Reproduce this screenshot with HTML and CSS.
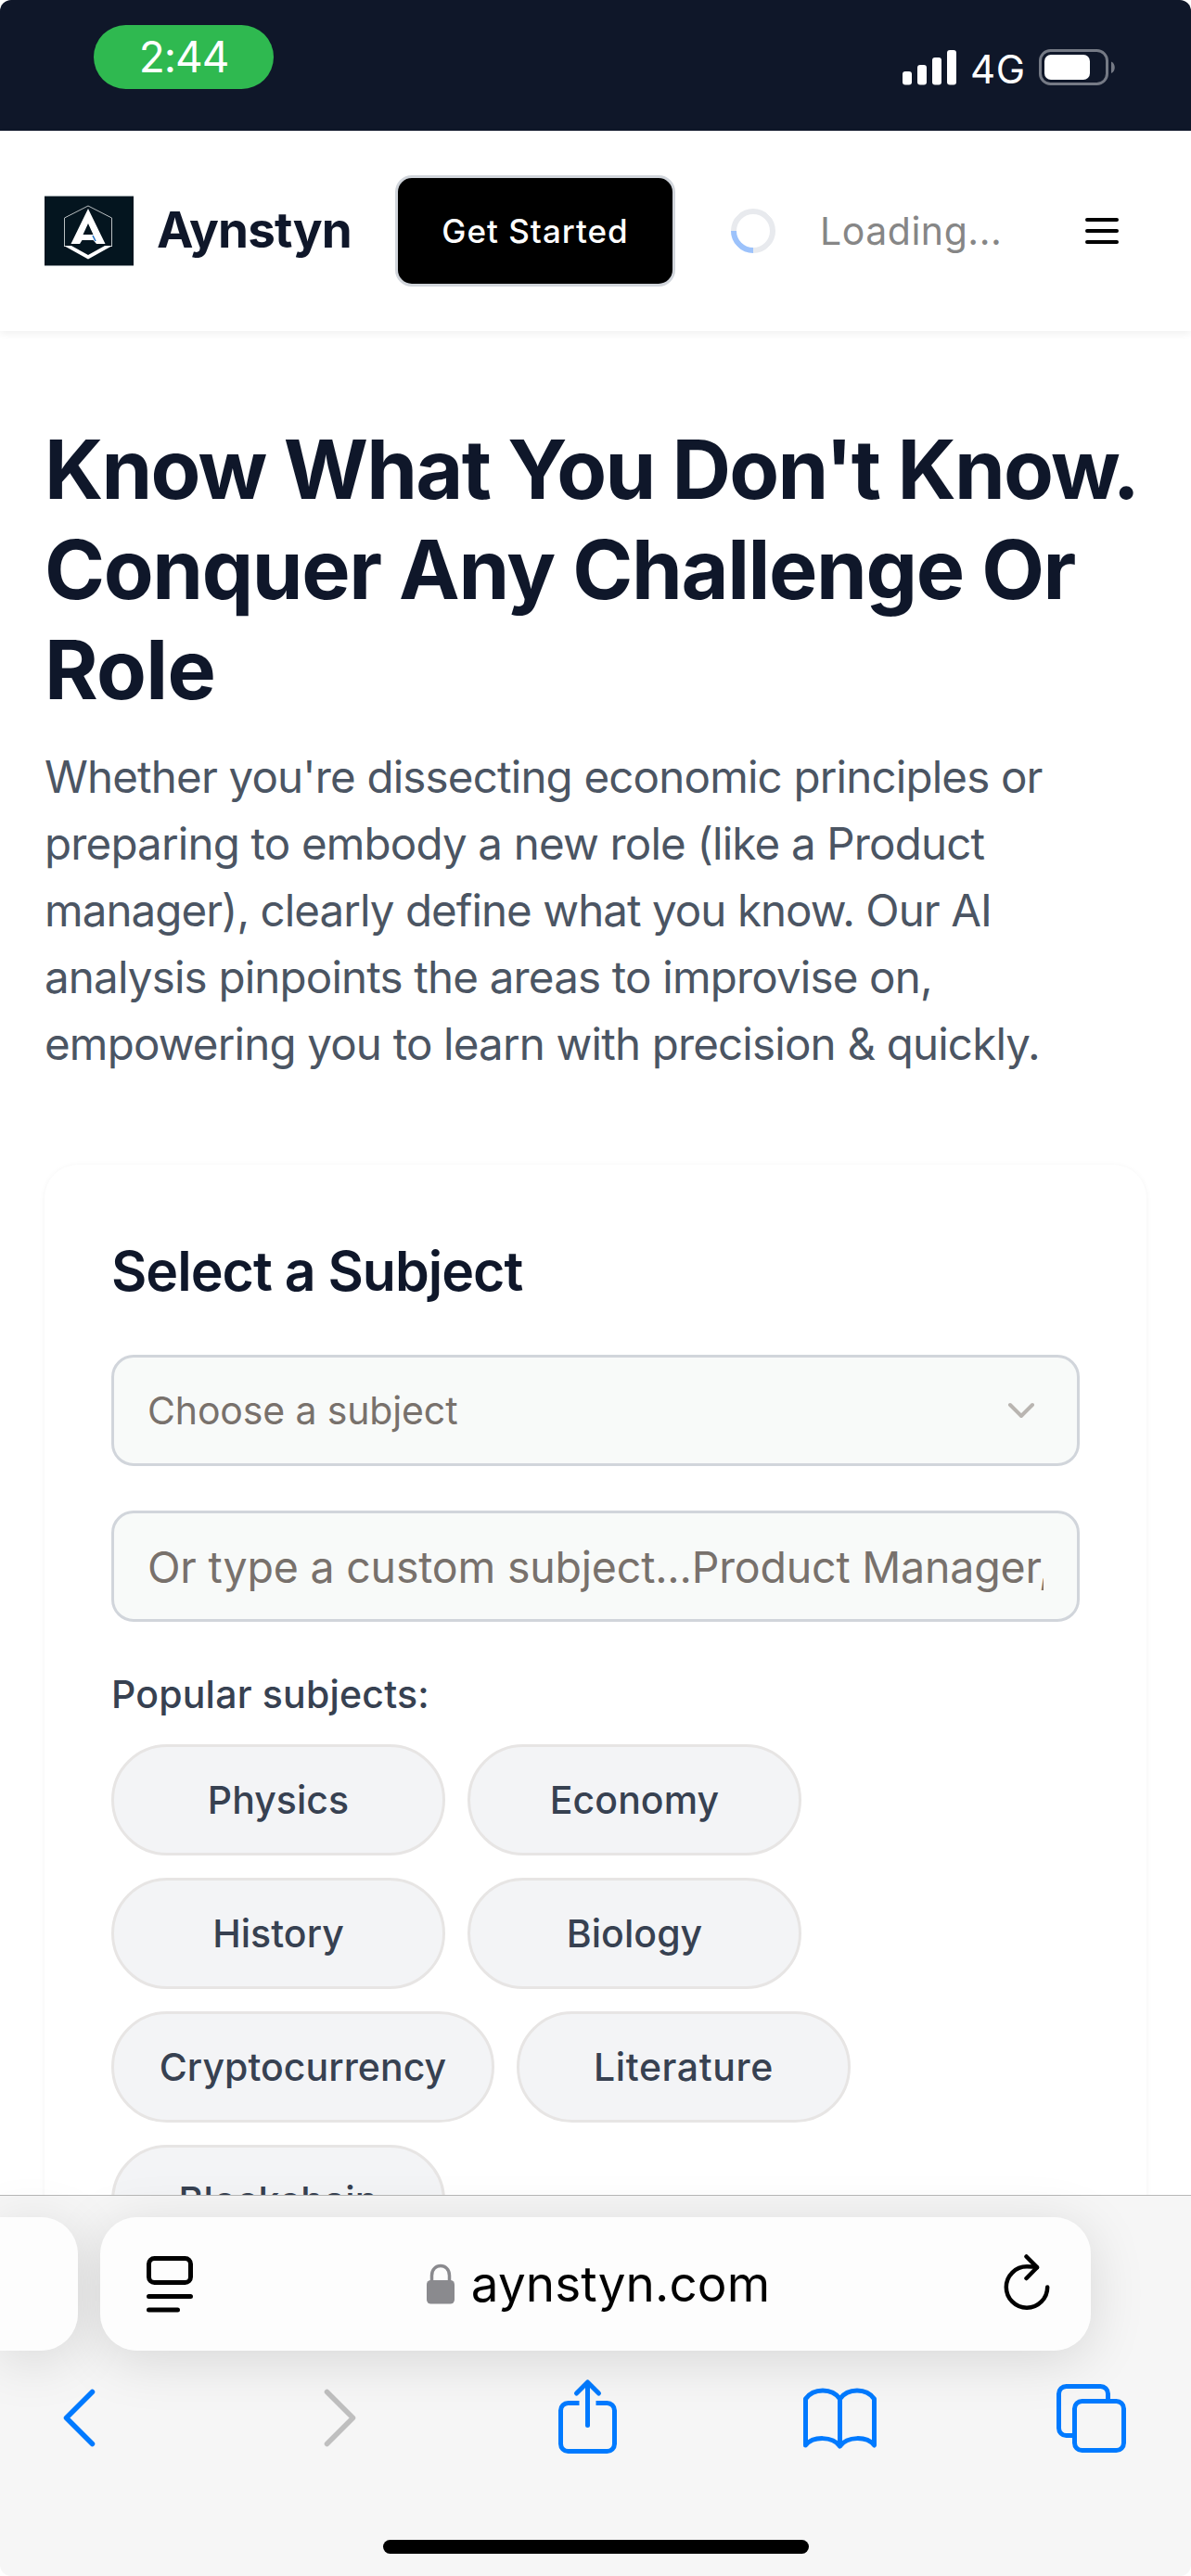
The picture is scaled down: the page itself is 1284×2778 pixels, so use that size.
FILE: index.html
```html
<!DOCTYPE html>
<html lang="en">
<head>
<meta charset="utf-8">
<title>Aynstyn</title>
<link rel="stylesheet" href="styles.css">
</head>
<body>
<div class="screen">
  <div class="status">
    <div class="status-time">2:44</div>
    <div class="status-right">
      <svg class="signal" viewBox="0 0 58 38" width="58" height="38" fill="#fff">
        <rect x="0" y="23" width="10" height="14.5" rx="3"/>
        <rect x="16" y="16" width="10" height="21.5" rx="3"/>
        <rect x="32" y="8" width="10" height="29.5" rx="3"/>
        <rect x="48" y="0" width="10" height="37.5" rx="3"/>
      </svg>
      <span class="network">4G</span>
      <svg class="battery" viewBox="0 0 82 40" width="82" height="40">
        <rect x="1.5" y="1.5" width="72" height="36" rx="11" fill="none" stroke="#757a85" stroke-width="3"/>
        <rect x="6" y="6" width="49" height="27" rx="7" fill="#fff"/>
        <path d="M78 13.5c5 2 5 10.500 0 12.500z" fill="#757a85"/>
      </svg>
    </div>
  </div>

  <header class="header">
    <svg class="logo" viewBox="0 0 96 76" width="96" height="76">
      <rect width="96" height="76" fill="#04151f"/>
      <path d="M0 .5h96M0 75.500h96" stroke="#8d979b" stroke-width="1"/>
      <path d="M47 11 21.500 24v31M47 11l25.500 13v31" fill="none" stroke="#b9bfc1" stroke-width="1"/>
      <path fill="#fff" fill-rule="evenodd" d="M47 14 65.500 52H56l-3.500-4h-12L38 52h-9.500zM47 30l-5.500 12h11z"/>
      <path d="M52 43l3 6" stroke="#1f6fc4" stroke-width="1.500"/>
      <path fill="#fff" d="M21 54h8l18 10 18-10h8L47 68.500z"/>
    </svg>
    <span class="brand">Aynstyn</span>
    <button class="cta">Get Started</button>
    <span class="spinner"></span>
    <span class="loading">Loading...</span>
    <svg class="menu" viewBox="0 0 48 48" width="48" height="48" stroke="#000" stroke-width="4" stroke-linecap="round">
      <path d="M8 12h32M8 24h32M8 36h32"/>
    </svg>
  </header>

  <main class="main">
    <h1 class="title"><span class="t1">Know What You Don't Know.</span><br><span class="t2">Conquer Any Challenge Or</span><br><span class="t3">Role</span></h1>
    <p class="lead">Whether you're dissecting economic principles or<br>preparing to embody a new role (like a Product<br><span class="tight">manager), clearly define what you know. Our AI</span><br>analysis pinpoints the areas to improvise on,<br>empowering you to learn with precision &amp; quickly.</p>

    <section class="card">
      <h2 class="card-title">Select a Subject</h2>
      <div class="field select">
        <span>Choose a subject</span>
        <svg viewBox="0 0 36 24" width="36" height="24" fill="none" stroke="#b9b5b1" stroke-width="4" stroke-linecap="round" stroke-linejoin="round"><path d="M6 6l12 12L30 6"/></svg>
      </div>
      <input class="field custom" type="text" placeholder="Or type a custom subject...Product Manager,">
      <p class="popular">Popular subjects:</p>
      <div class="chips">
        <button class="chip">Physics</button>
        <button class="chip">Economy</button>
        <button class="chip">History</button>
        <button class="chip">Biology</button>
        <button class="chip wide">Cryptocurrency</button>
        <button class="chip lit">Literature</button>
        <button class="chip">Blockchain</button>
      </div>
    </section>
  </main>

  <footer class="browser">
    <div class="tabs-strip">
      <div class="prev-tab"></div>
      <div class="address">
        <svg viewBox="0 0 56 64" width="56" height="64" fill="none" stroke="#000" stroke-width="5" stroke-linecap="round">
          <rect x="5.500" y="4.500" width="45" height="26" rx="6"/>
          <path d="M5.500 45.500h45M5.500 60h31"/>
        </svg>
        <div class="host">
          <svg viewBox="0 0 30 44" width="30" height="44">
            <path d="M5.500 20V13c0-14 19-14 19 0v7" fill="none" stroke="#8a8a8e" stroke-width="3.500"/>
            <rect x="0" y="18" width="30" height="25.500" rx="4.500" fill="#8a8a8e"/>
          </svg>
          <span>aynstyn.com</span>
        </div>
        <svg viewBox="0 0 56 64" width="56" height="64" fill="none" stroke="#000" stroke-width="4.500" stroke-linecap="round" stroke-linejoin="round">
          <path d="M50.200 35.500a22.200 22.200 0 1 1-22.200-22.200q7 0 11 .8"/>
          <path d="M27.500 2.500 39 14.200 27.500 26"/>
        </svg>
      </div>
    </div>
    <nav class="nav">
      <svg viewBox="0 0 42 84" width="42" height="84" fill="none" stroke="#007aff" stroke-width="5.500" stroke-linecap="round" stroke-linejoin="round"><path d="M35.500 14.500 7.500 42.500l28 28"/></svg>
      <svg viewBox="0 0 42 84" width="42" height="84" fill="none" stroke="#bfbfbf" stroke-width="5.500" stroke-linecap="round" stroke-linejoin="round"><path d="M6.500 14.500l28 28-28 28"/></svg>
      <svg viewBox="0 0 68 84" width="68" height="84" fill="none" stroke="#007aff" stroke-width="5" stroke-linecap="round" stroke-linejoin="round">
        <path stroke-linecap="butt" d="M24.500 26.500H12.500a8 8 0 0 0-8 8v36a8 8 0 0 0 8 8h42a8 8 0 0 0 8-8v-36a8 8 0 0 0-8-8H42.500"/>
        <path d="M33.500 50.500V4.500M21.500 16l12-12 12 12"/>
      </svg>
      <svg viewBox="0 0 85 84" width="85" height="84" fill="none" stroke="#007aff" stroke-width="5" stroke-linecap="round" stroke-linejoin="round">
        <path d="M42.500 22C34 10 14 10 5.500 22v50c8-10 29-10 37 1 8-11 29-11 37-1V22c-8.500-12-28.500-12-37 0v51"/>
      </svg>
      <svg viewBox="0 0 81 84" width="81" height="84" fill="none" stroke="#007aff" stroke-width="5">
        <path d="M58.500 25V16.500a8 8 0 0 0-8-8h-37a8 8 0 0 0-8 8v37a8 8 0 0 0 8 8H22"/>
        <rect x="22.500" y="24.500" width="53" height="53" rx="8"/>
      </svg>
    </nav>
    <div class="home"></div>
  </footer>
</div>
</body>
</html>
```
FILE: styles.css
```css
* { box-sizing: border-box; margin: 0; padding: 0; }

body {
  width: 1284px;
  height: 2778px;
  overflow: hidden;
  background: #fff;
  font-family: Inter, "Liberation Sans", sans-serif;
}

svg { display: block; flex: none; }
button, input { font-family: inherit; }

.screen {
  display: flex;
  flex-direction: column;
  width: 1284px;
  height: 2778px;
  border-radius: 12px;
  overflow: hidden;
}

/* Status bar */
.status {
  flex: none;
  display: flex;
  align-items: flex-start;
  justify-content: space-between;
  height: 141px;
  padding: 27px 82px 0 101px;
  background: #0f1729;
  color: #fff;
}
.status-time {
  width: 194px;
  height: 69px;
  border-radius: 34.5px;
  background: #2fb950;
  font-size: 46px;
  line-height: 69px;
  letter-spacing: -1px;
  text-align: center;
}
.status-right {
  display: flex;
  align-items: center;
  height: 91px;
}
.network {
  width: 60px;
  margin: 3px 14px 0 15px;
  font-size: 42px;
  letter-spacing: 0.5px;
}

/* Site header */
.header {
  flex: none;
  display: flex;
  align-items: center;
  height: 216px;
  padding: 0 72px 0 48px;
  background: #fff;
  box-shadow: 0 3px 8px rgba(0, 0, 0, 0.06);
}
.brand {
  width: 212px;
  margin: -3px 45px 0 25px;
  color: #0f172a;
  font-size: 53px;
  font-weight: 700;
  letter-spacing: -0.9px;
}
.cta {
  width: 302px;
  height: 120px;
  border: 3px solid #d1d5db;
  border-radius: 18px;
  background: #000;
  color: #fff;
  font-size: 35px;
  font-weight: 500;
  letter-spacing: 1px;
}
.spinner {
  width: 48px;
  height: 48px;
  margin-left: 60px;
  border: 6px solid #e8eaee;
  border-radius: 50%;
  border-left-color: #9cc2fb;
  transform: rotate(-45deg);
}
.loading {
  margin-left: 48px;
  color: #868686;
  font-size: 41px;
  letter-spacing: 0.53px;
}
.menu { margin-left: auto; }

/* Page */
.main {
  flex: 1;
  min-height: 0;
  padding: 95px 48px 0;
  overflow: hidden;
}
.title {
  color: #0f172a;
  font-size: 88px;
  font-weight: 700;
  line-height: 108px;
  white-space: nowrap;
}
.t1 { letter-spacing: -1.75px; }
.t2 { letter-spacing: -1.39px; }
.t3 { letter-spacing: -0.7px; }
.lead {
  margin-top: 26px;
  color: #4b5563;
  font-size: 47.5px;
  line-height: 72px;
  letter-spacing: -0.83px;
  white-space: nowrap;
}
.tight { letter-spacing: -0.95px; }
.card {
  height: 1500px;
  margin-top: 94px;
  padding: 73px 72px 72px;
  border-radius: 36px;
  background: #fff;
  box-shadow: 0 1px 6px rgba(0, 0, 0, 0.05);
}
.card-title {
  color: #0f172a;
  font-size: 59px;
  font-weight: 600;
  line-height: 84px;
  letter-spacing: -1px;
}
.field {
  display: flex;
  align-items: center;
  justify-content: space-between;
  width: 100%;
  height: 120px;
  border: 3px solid #d1d5db;
  border-radius: 24px;
  background: #f8faf9;
  color: #78716c;
}
.select {
  margin-top: 48px;
  padding: 0 42px 0 36px;
  font-size: 41px;
  letter-spacing: -0.14px;
}
.custom {
  margin-top: 48px;
  padding: 2px 36px 0;
  font-size: 46.5px;
  letter-spacing: -0.2px;
}
.custom::placeholder { color: #78716c; opacity: 1; }
.popular {
  margin-top: 48px;
  color: #374151;
  font-size: 41px;
  font-weight: 500;
  line-height: 60px;
  letter-spacing: 0.2px;
}
.chips {
  display: flex;
  flex-wrap: wrap;
  gap: 24px;
  margin-top: 24px;
}
.chip {
  width: 360px;
  height: 120px;
  border: 3px solid #e7e5e4;
  border-radius: 60px;
  background: #f3f4f6;
  color: #374151;
  font-size: 41px;
  font-weight: 500;
  letter-spacing: 0.05px;
}
.chip.wide { width: 413px; }
.chip.lit { letter-spacing: 0.6px; }

/* Browser toolbar */
.browser {
  flex: none;
  position: relative;
  height: 411px;
  border-top: 1px solid #b8b8b8;
  background: #f6f6f6;
}
.tabs-strip {
  display: flex;
  gap: 24px;
  padding-top: 23px;
  isolation: isolate;
}
.prev-tab, .address {
  position: relative;
  height: 144px;
  background: #fdfdfd;
}
/* Shadows sit on a layer beneath both tabs so neither darkens its neighbour */
.prev-tab::before, .address::before {
  content: "";
  position: absolute;
  inset: 0;
  z-index: -1;
  border-radius: inherit;
  box-shadow: 0 10px 60px rgba(0, 0, 0, 0.13);
}
.prev-tab { width: 84px; border-radius: 0 40px 40px 0; }
.address {
  display: flex;
  align-items: center;
  justify-content: space-between;
  width: 1068px;
  padding: 0 41px 0 47px;
  border-radius: 40px;
}
.host {
  display: flex;
  align-items: center;
  gap: 18px;
  font-size: 53px;
  letter-spacing: 0.1px;
}
.nav {
  display: grid;
  grid-template-columns: 282px 254px 263px 273px 81px;
  align-items: center;
  height: 144px;
  padding-left: 64px;
}
.home {
  width: 459px;
  height: 15px;
  margin: 60px auto 0;
  border-radius: 8px;
  background: #000;
}
```
